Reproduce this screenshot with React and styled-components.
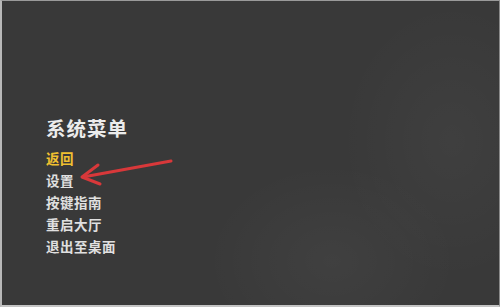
import React from 'react';
import styled, { createGlobalStyle } from 'styled-components';

const GlobalStyle = createGlobalStyle`
  html, body {
    margin: 0;
    padding: 0;
    background: #3a3a3a;
  }
`;

const Screen = styled.div`
  position: relative;
  box-sizing: border-box;
  width: 500px;
  height: 307px;
  overflow: hidden;
  border-left: 2px solid #b8b8b8;
  border-top: 1px solid #9a9a9a;
  border-bottom: 2px solid #c4c4c4;
  border-right: 1px solid #8a8a8a;
  background:
    radial-gradient(ellipse 180px 140px at 330px 260px, rgba(255,255,255,0.035), transparent 70%),
    radial-gradient(ellipse 160px 200px at 450px 140px, rgba(255,255,255,0.03), transparent 70%),
    #393939;
  font-family: "Noto Sans CJK SC", "Noto Sans", sans-serif;
  padding: 114px 0 0 44px;
`;

const Menu = styled.nav`
  display: flex;
  flex-direction: column;
`;

const Title = styled.h1`
  margin: 0 0 6px;
  font-size: 19.5px;
  line-height: 26px;
  font-weight: 700;
  letter-spacing: 1px;
  color: #ececec;
`;

const Item = styled.div`
  font-size: 13.5px;
  line-height: 22px;
  font-weight: 700;
  letter-spacing: 0.5px;
  color: ${(p) => (p.$active ? '#f0c030' : '#e0e0e0')};
`;

const Arrow = styled.svg`
  position: absolute;
  left: 0;
  top: 0;
  pointer-events: none;
`;

const items = ['返回', '设置', '按键指南', '重启大厅', '退出至桌面'];

export default function App() {
  return (
    <>
      <GlobalStyle />
      <Screen>
        <Menu>
          <Title>系统菜单</Title>
          {items.map((label, i) => (
            <Item key={label} $active={i === 0}>
              {label}
            </Item>
          ))}
        </Menu>
        <Arrow width="500" height="307" viewBox="0 0 500 307">
          <g stroke="#d8383a" strokeWidth="3" strokeLinecap="round" fill="none">
            <path d="M169 160 L81 176" />
            <path d="M96 164 L80 176 L98 183" strokeLinejoin="round" />
          </g>
        </Arrow>
      </Screen>
    </>
  );
}
